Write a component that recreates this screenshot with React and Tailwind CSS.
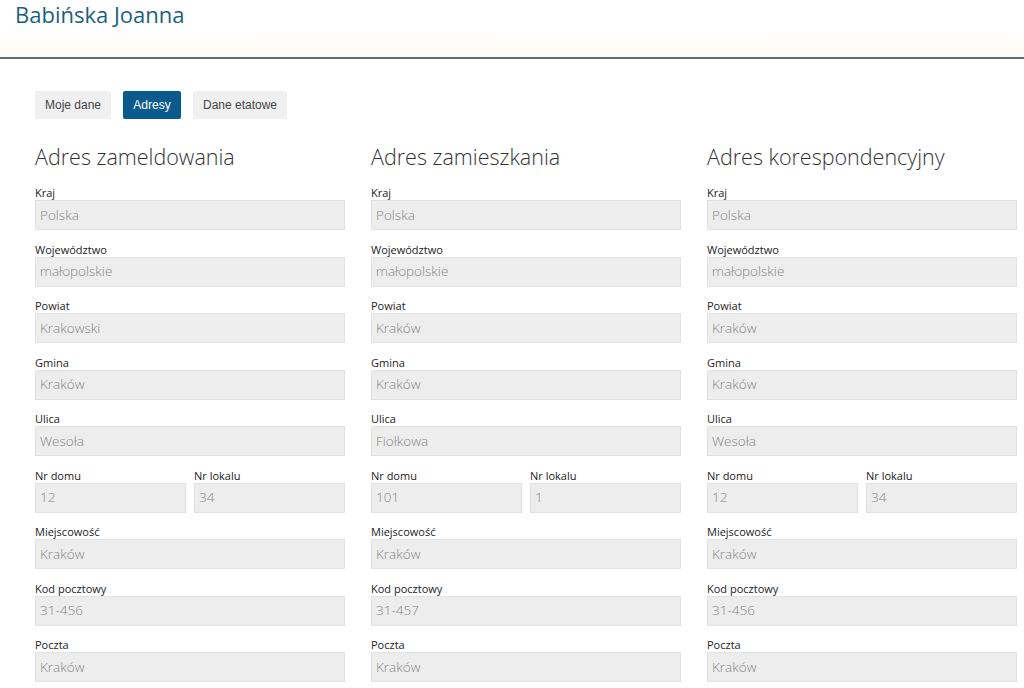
const addresses = [
  {
    title: 'Adres zameldowania',
    kraj: 'Polska', woj: 'małopolskie', powiat: 'Krakowski', gmina: 'Kraków',
    ulica: 'Wesoła', dom: '12', lokal: '34', miejsc: 'Kraków', kod: '31-456', poczta: 'Kraków',
  },
  {
    title: 'Adres zamieszkania',
    kraj: 'Polska', woj: 'małopolskie', powiat: 'Kraków', gmina: 'Kraków',
    ulica: 'Fiołkowa', dom: '101', lokal: '1', miejsc: 'Kraków', kod: '31-457', poczta: 'Kraków',
  },
  {
    title: 'Adres korespondencyjny',
    kraj: 'Polska', woj: 'małopolskie', powiat: 'Kraków', gmina: 'Kraków',
    ulica: 'Wesoła', dom: '12', lokal: '34', miejsc: 'Kraków', kod: '31-456', poczta: 'Kraków',
  },
]

// Pole tylko do odczytu
function Field({ label, value }) {
  return (
    <div className="mb-[12.5px]">
      <div className="h-[14px] text-[11px] leading-[14px] font-medium text-[#222]">{label}</div>
      <div className="h-[30px] bg-[#ededed] border border-[#e2e2e2] px-[4px] flex items-center text-[13.5px] font-light text-[#858585]">
        {value}
      </div>
    </div>
  )
}

function AddressColumn({ a }) {
  return (
    <div className="w-[310px]">
      <h2 className="text-[21.5px] font-light text-[#333] leading-[28px] mb-[15px] mt-[2px]">{a.title}</h2>
      <Field label="Kraj" value={a.kraj} />
      <Field label="Województwo" value={a.woj} />
      <Field label="Powiat" value={a.powiat} />
      <Field label="Gmina" value={a.gmina} />
      <Field label="Ulica" value={a.ulica} />
      <div className="flex gap-[8px]">
        <div className="flex-1"><Field label="Nr domu" value={a.dom} /></div>
        <div className="flex-1"><Field label="Nr lokalu" value={a.lokal} /></div>
      </div>
      <Field label="Miejscowość" value={a.miejsc} />
      <Field label="Kod pocztowy" value={a.kod} />
      <Field label="Poczta" value={a.poczta} />
    </div>
  )
}

export default function App() {
  return (
    <div className="w-[1024px] h-[688px] overflow-hidden bg-white font-['Open_Sans',sans-serif]">
      {/* ── Nagłówek ── */}
      <div className="h-[59px] border-b-2 border-[#5b6f79] bg-gradient-to-b from-white via-white to-[#fffaf5] px-[15px] pt-[1px]">
        <h1 className="text-[22px] font-normal leading-[26px] text-[#1d5f80]">Babińska Joanna</h1>
      </div>

      {/* ── Zakładki ── */}
      <div className="flex gap-[12px] pl-[35px] mt-[32px] font-['Liberation_Sans',sans-serif] text-[12px]">
        <button className="h-[28px] w-[76px] bg-[#f0f0f0] text-[#444]">Moje dane</button>
        <button className="h-[28px] w-[58px] bg-[#0b5a8e] text-white rounded-[2px]">Adresy</button>
        <button className="h-[28px] w-[94px] bg-[#f0f0f0] text-[#444]">Dane etatowe</button>
      </div>

      {/* ── Kolumny adresów ── */}
      <div className="flex gap-[26px] pl-[35px] mt-[22px]">
        {addresses.map((a) => (
          <AddressColumn key={a.title} a={a} />
        ))}
      </div>
    </div>
  )
}
